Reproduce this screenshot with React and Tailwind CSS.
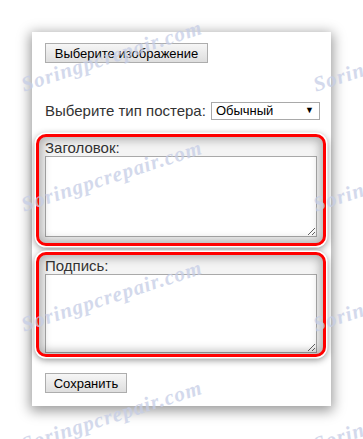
import React from 'react';

const WATERMARKS = [
  { left: 22, top: 70 },
  { left: 314, top: 70 },
  { left: 22, top: 190 },
  { left: 314, top: 190 },
  { left: 22, top: 310 },
  { left: 314, top: 310 },
  { left: 22, top: 430 },
  { left: 314, top: 430 },
];

const Highlight = ({ label, height, areaHeight, labelTop }) => (
  <div
    className={`relative ml-[-9px] w-[290px] rounded-[10px] border-[3px] border-[#ff0000] bg-[#f4f4f4] pl-[6px] shadow-[0_0_0_1.5px_#ffffff,0_2px_7px_1px_rgba(0,0,0,0.45)] ${height}`}
  >
    <div className={`text-[15px] leading-[16px] text-[#333] ${labelTop}`}>{label}</div>
    <textarea
      readOnly
      className={`block w-[272px] border border-[#a9a9a9] bg-white ${areaHeight}`}
    />
    <div className="pointer-events-none absolute inset-0 rounded-[7px] shadow-[inset_0_0_10px_3px_rgba(0,0,0,0.28)]" />
  </div>
);

export default function App() {
  return (
    <div className="relative h-[439px] w-[363px] overflow-hidden bg-white font-['Liberation_Sans',Arial,sans-serif]">
      <div className="ml-[32px] mt-[32px] flex h-[374px] w-[299px] flex-col bg-white pl-[13px] pt-[11px] shadow-[0_3px_12px_2px_rgba(0,0,0,0.4)]">
        <button className="h-[20px] w-[163px] border border-[#adadad] bg-gradient-to-b from-[#f6f6f6] to-[#dedede] text-[13px] leading-none text-black">
          Выберите изображение
        </button>

        <div className="mt-[39px] flex h-[18px] items-center">
          <span className="text-[15px] text-[#333]">Выберите тип постера:</span>
          <div className="ml-[5px] flex h-[18px] w-[109px] items-center justify-between border border-[#a9a9a9] bg-white pl-[4px] pr-[5px] text-[13px] text-black">
            <span>Обычный</span>
            <span className="text-[9px]">▼</span>
          </div>
        </div>

        <div className="mt-[14px]">
          <Highlight label="Заголовок:" height="h-[112px]" areaHeight="h-[81px]" labelTop="pt-[3px]" />
        </div>

        <div className="mt-[6px]">
          <Highlight label="Подпись:" height="h-[105px]" areaHeight="h-[79px]" labelTop="pt-[3px]" />
        </div>

        <button className="mt-[16px] h-[20px] w-[82px] border border-[#adadad] bg-gradient-to-b from-[#f6f6f6] to-[#dedede] text-[13px] leading-none text-black">
          Сохранить
        </button>
      </div>

      {/* watermark */}
      <div className="pointer-events-none absolute inset-0">
        {WATERMARKS.map((w, i) => (
          <span
            key={i}
            className="absolute origin-left -rotate-[18deg] whitespace-nowrap font-['Liberation_Serif',serif] text-[21px] font-bold italic tracking-[1px] text-[#c5cde6] opacity-75"
            style={{ left: w.left, top: w.top }}
          >
            Soringpcrepair.com
          </span>
        ))}
      </div>
    </div>
  );
}
